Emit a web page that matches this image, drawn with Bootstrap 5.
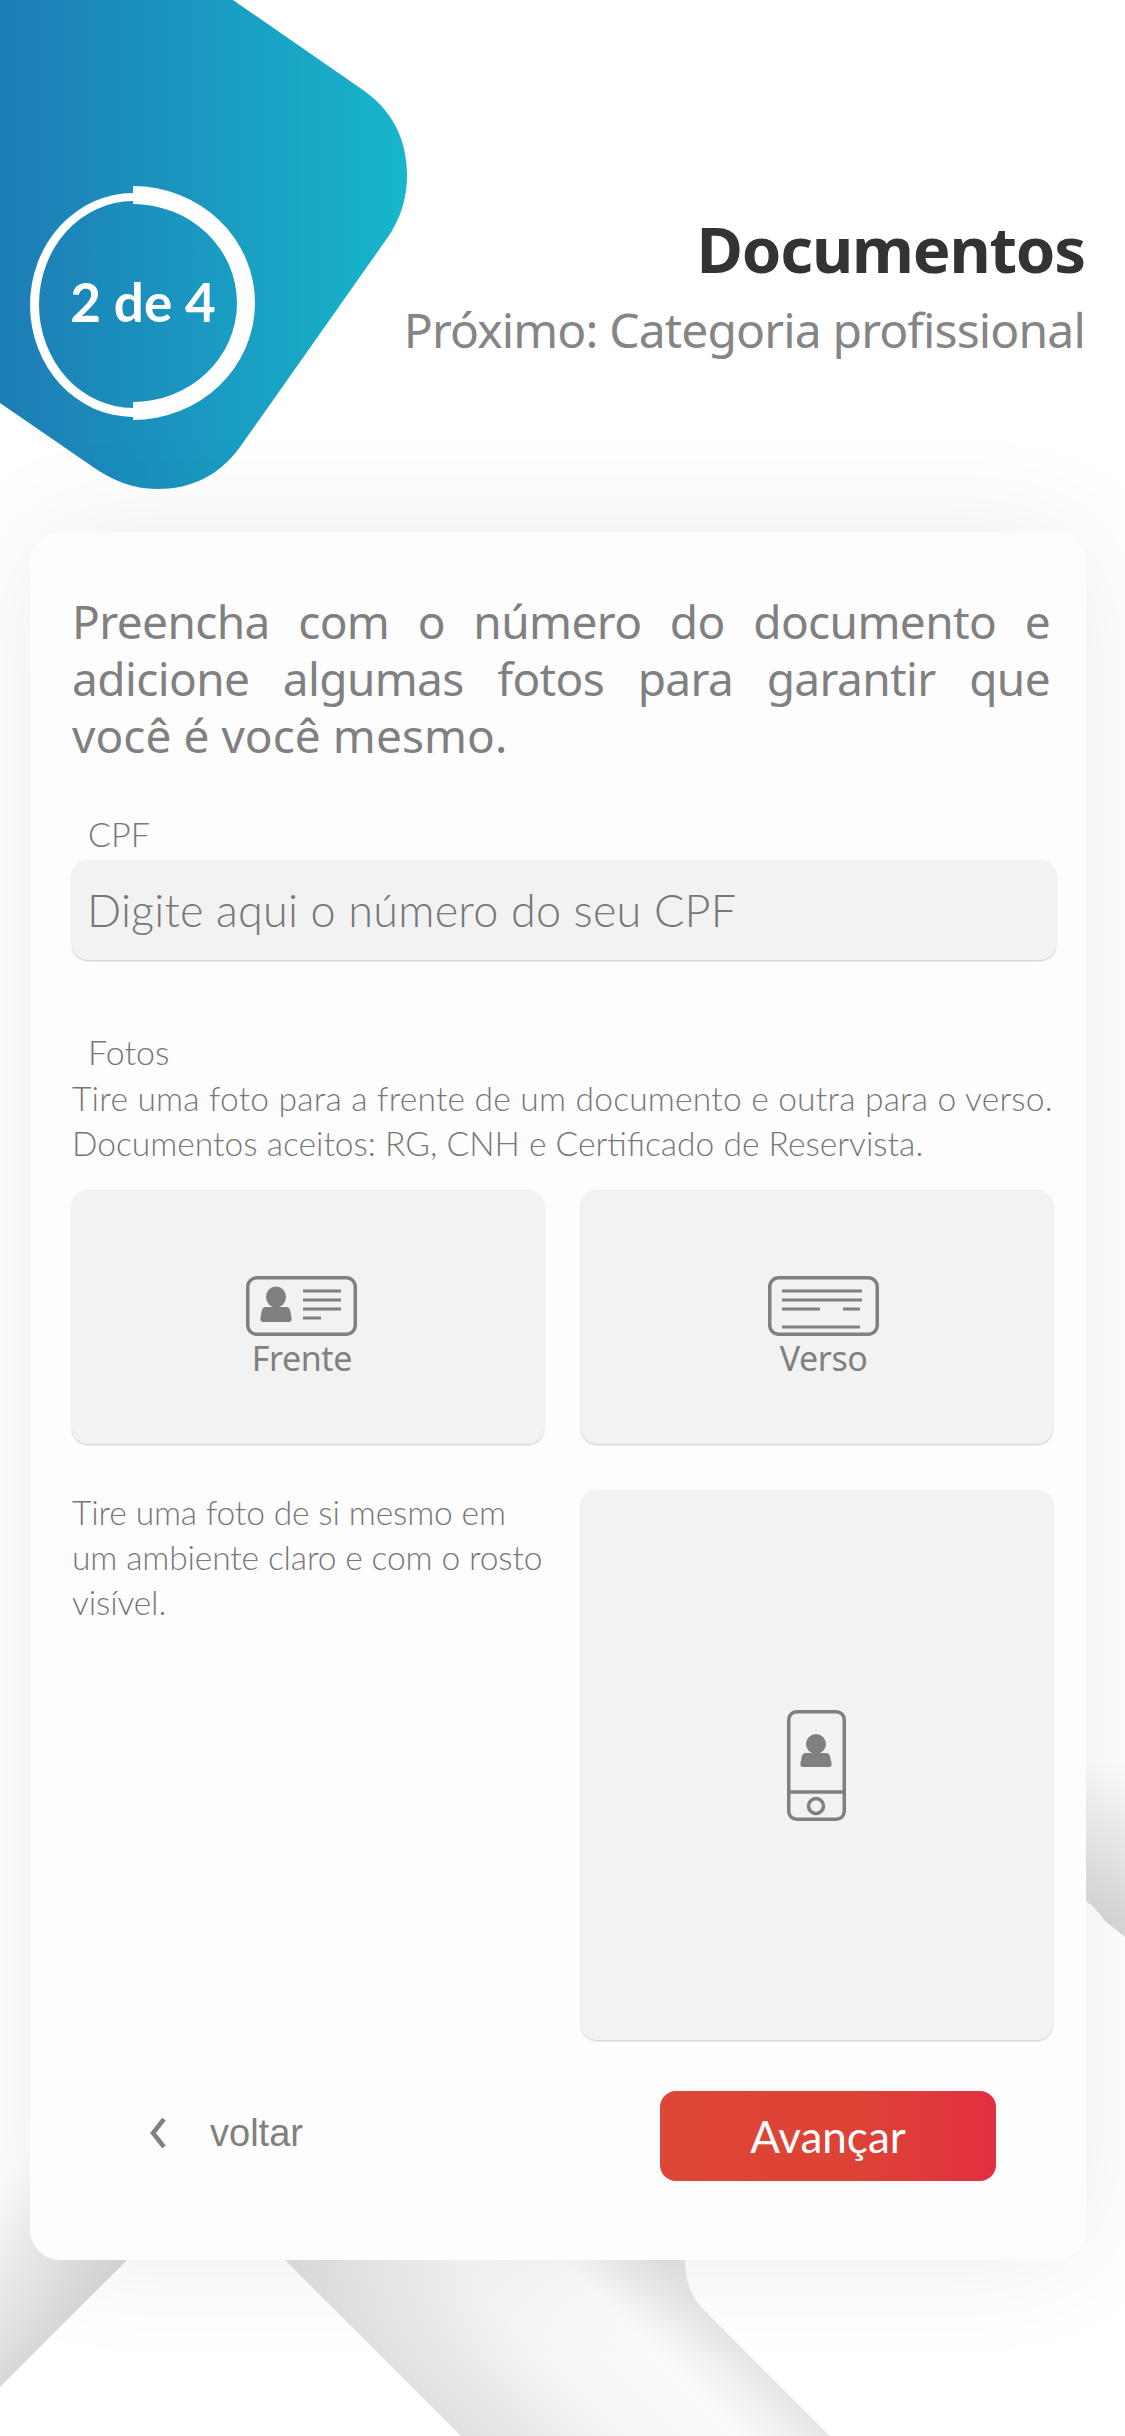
<!DOCTYPE html>
<html lang="pt-BR">

<head>
    <meta charset="UTF-8">
    <meta name="viewport" content="width=device-width, initial-scale=1.0">
    <title>Documentos</title>
    <link href="https://cdn.jsdelivr.net/npm/bootstrap@5.3.3/dist/css/bootstrap.min.css" rel="stylesheet">
    <style>
        body { width: 1125px; height: 2436px; overflow: hidden; background: #fff; font-family: "Lato", sans-serif; color: #808080; }
        .page-wrap { position: relative; height: 2436px; }
        .page-shapes { position: absolute; left: 0; top: 0; z-index: 0; }
        .page-head, .form-card { position: relative; z-index: 1; }

        /* header */
        .page-head { height: 532px; }
        .step-blob { position: relative; width: 407px; height: 489px; flex: none; margin-right: -20px; }
        .step-label { position: absolute; left: 30px; width: 226px; top: 270px; line-height: 64px; text-align: center; color: #fff; font-size: 53px; font-weight: 700; white-space: nowrap; }
        .head-text { width: 738px; padding: 212px 40px 0 0; text-align: right; font-family: "Noto Sans", sans-serif; white-space: nowrap; }
        .head-title { font-size: 63.5px; line-height: 74px; font-weight: 700; color: #333; margin: 0; letter-spacing: -1.2px; }
        .head-next { font-size: 48px; line-height: 60px; color: #858585; margin: 14px 0 0; letter-spacing: -.85px; }

        /* card */
        .form-card { width: 1056px; height: 1728px; margin-left: 30px; padding: 61px 30px 0 42px; background: #fdfdfd; border: 0; border-radius: 30px; box-shadow: 0 0 120px rgba(0, 0, 0, .07); }
        .intro-text { font-family: "Noto Sans", sans-serif; font-size: 46px; line-height: 57px; color: #808080; width: 978px; margin: 0 0 50px; letter-spacing: -.6px; }
        .intro-line { display: block; white-space: nowrap; text-align: justify; text-align-last: justify; }
        .intro-end { display: block; letter-spacing: .05px; }
        .field-label { display: block; font-size: 34px; line-height: 40px; font-weight: 300; color: #777; margin: 0 0 6px 16px; }
        .cpf-input.form-control { height: 100px; background: #f2f2f2; border: 0; border-radius: 16px; box-shadow: 0 1px 2px rgba(0, 0, 0, .22); padding: 0 15px; font-size: 45px; letter-spacing: .2px; font-weight: 300; margin-bottom: 72px; }
        .cpf-input.form-control::placeholder { color: #777; opacity: 1; }
        .help-text { font-size: 33.6px; line-height: 45px; font-weight: 300; color: #777; margin: 0; white-space: nowrap; }
        .help-wide { letter-spacing: .2px; }
        .tile-row { --bs-gutter-x: 37px; --bs-gutter-y: 0; margin-right: -15px; }
        .tile-gap { margin-top: 46px; }
        .photo-tile { background: #f2f2f2; border-radius: 16px; box-shadow: 0 1px 2px rgba(0, 0, 0, .2); }
        .tile-doc { height: 254px; padding-top: 18px; }
        .tile-self { height: 550px; }
        .tile-name { font-family: "Noto Sans", sans-serif; font-size: 34px; line-height: 38px; margin-top: 3px; letter-spacing: -.4px; }
        .shift-left { padding-right: 12px; }
        .shift-right { padding-left: 14px; }
        .self-text { letter-spacing: -.15px; }

        /* footer */
        .form-foot { margin-top: 51px; padding: 0 60px 0 78px; }
        .back-link { font-family: "Liberation Sans", sans-serif; font-size: 38px; color: #808080; text-decoration: none; gap: 44px; padding-bottom: 6px; }
        .next-btn.btn { width: 336px; height: 90px; border: 0; border-radius: 16px; background: linear-gradient(90deg, #de4735 0%, #dd4236 60%, #e32f41 100%); color: #fff; font-size: 44px; font-weight: 400; padding: 0; }
    </style>
</head>

<body>
    <div class="page-wrap">
        <!-- background shapes behind the card -->
        <svg class="page-shapes" width="1125" height="2436" viewBox="0 0 1125 2436">
            <defs>
                <linearGradient id="shadeLeft" gradientUnits="userSpaceOnUse" x1="64" y1="2323" x2="-40" y2="2219">
                    <stop offset="0" stop-color="#d8d8d8" />
                    <stop offset="1" stop-color="#d8d8d8" stop-opacity="0" />
                </linearGradient>
                <linearGradient id="shadeMid" gradientUnits="userSpaceOnUse" x1="372" y1="2347" x2="557" y2="2162">
                    <stop offset="0" stop-color="#e0e0e0" />
                    <stop offset=".45" stop-color="#f6f6f6" />
                    <stop offset=".75" stop-color="#fbfbfb" />
                    <stop offset="1" stop-color="#e6e6e6" />
                </linearGradient>
                <linearGradient id="shadeRight" gradientUnits="userSpaceOnUse" x1="1105" y1="1919" x2="1125" y2="1760">
                    <stop offset="0" stop-color="#d8d8d8" />
                    <stop offset="1" stop-color="#d8d8d8" stop-opacity="0" />
                </linearGradient>
            </defs>
            <polygon points="0,2150 236,2150 128,2259 0,2387" fill="url(#shadeLeft)" />
            <path d="M284 2259 L461 2436 H830 L700 2306 Q685 2288 685 2259 V2150 H284 Z" fill="url(#shadeMid)" />
            <path d="M1086 1700 H1125 V1937 L1105 1921 Q1095 1907 1086 1901 Z" fill="url(#shadeRight)" />
        </svg>

        <header class="page-head d-flex">
            <div class="step-blob">
                <svg width="407" height="489" viewBox="0 0 407 489">
                    <defs>
                        <linearGradient id="blobFill" x1="0" y1="0" x2="1" y2="0">
                            <stop offset="0" stop-color="#1d7cb5" />
                            <stop offset="1" stop-color="#17b6cc" />
                        </linearGradient>
                    </defs>
                    <path d="M0 0 H233 L363 90 C400 116 407 150 407 177 C407 200 399 221 388 237 L240 447 C218 477 190 489 157 489 C133 489 112 480 93 467 L0 403 Z" fill="url(#blobFill)" />
                    <path d="M133 186 A122 117 0 0 1 133 420 V402 A104 99 0 0 0 133 204 Z" fill="#fff" />
                    <path d="M133 193 A103 112 0 0 0 133 417 V408 A94 103.5 0 0 1 133 201 Z" fill="#fff" />
                </svg>
                <span class="step-label">2 de 4</span>
            </div>
            <div class="head-text">
                <h1 class="head-title">Documentos</h1>
                <p class="head-next">Próximo: Categoria profissional</p>
            </div>
        </header>

        <main class="card form-card">
            <p class="intro-text">
                <span class="intro-line">Preencha com o número do documento e</span>
                <span class="intro-line">adicione algumas fotos para garantir que</span>
                <span class="intro-end">você é você mesmo.</span>
            </p>

            <label class="field-label" for="cpf">CPF</label>
            <input type="text" class="form-control cpf-input" id="cpf" placeholder="Digite aqui o número do seu CPF">

            <span class="field-label mb-0">Fotos</span>
            <p class="help-text mt-1 mb-4"><span class="help-wide">Tire uma foto para a frente de um documento e outra para o verso.</span><br>Documentos aceitos: RG, CNH e Certificado de Reservista.</p>

            <div class="row tile-row">
                <div class="col-6">
                    <div class="photo-tile tile-doc shift-left d-flex flex-column align-items-center justify-content-center">
                        <svg width="111" height="60" viewBox="0 0 111 60" fill="none" stroke="#808080">
                            <rect x="1.75" y="1.75" width="107.5" height="56.5" rx="9" stroke-width="3.5" />
                            <path d="M57 15H95M57 24H95M57 33H95M57 42H75" stroke-width="3" />
                            <ellipse cx="30" cy="21" rx="10" ry="10.5" fill="#808080" stroke="none" />
                            <path d="M20 31H40C43 31 44 33 44.500 36L45.500 42C46 45 44.500 46 42 46H18C15.500 46 14 45 14.500 42L15.500 36C16 33 17 31 20 31Z" fill="#808080" stroke="none" />
                        </svg>
                        <span class="tile-name">Frente</span>
                    </div>
                </div>
                <div class="col-6">
                    <div class="photo-tile tile-doc shift-right d-flex flex-column align-items-center justify-content-center">
                        <svg width="111" height="60" viewBox="0 0 111 60" fill="none" stroke="#808080">
                            <rect x="1.75" y="1.75" width="107.5" height="56.5" rx="9" stroke-width="3.5" />
                            <path d="M14 15H94M14 24H94M14 33H52M75 33H92M14 51H92" stroke-width="3" />
                        </svg>
                        <span class="tile-name">Verso</span>
                    </div>
                </div>
            </div>

            <div class="row tile-row tile-gap">
                <div class="col-6">
                    <p class="help-text self-text">Tire uma foto de si mesmo em<br>um ambiente claro e com o rosto<br>visível.</p>
                </div>
                <div class="col-6">
                    <div class="photo-tile tile-self d-flex align-items-center justify-content-center">
                        <svg width="59" height="111" viewBox="0 0 59 111" fill="none" stroke="#808080" stroke-width="3.500">
                            <rect x="1.750" y="1.750" width="55.500" height="107.500" rx="8" />
                            <path d="M2 82H57" />
                            <circle cx="29" cy="96" r="7.500" />
                            <circle cx="29" cy="34" r="10" fill="#808080" stroke="none" />
                            <path d="M19 43H39C42 43 43 45 43.500 48L44.500 53C45 56 44 57 41 57H17C14 57 13 56 13.500 53L14.500 48C15 45 16 43 19 43Z" fill="#808080" stroke="none" />
                        </svg>
                    </div>
                </div>
            </div>

            <div class="form-foot d-flex justify-content-between align-items-center">
                <a href="#" class="back-link d-flex align-items-center">
                    <svg width="16" height="30" viewBox="0 0 16 30" fill="none" stroke="#808080" stroke-width="4.500">
                        <path d="M14 1 L3 15 L14 29" />
                    </svg>
                    <span>voltar</span>
                </a>
                <button type="button" class="btn next-btn">Avançar</button>
            </div>
        </main>
    </div>

    <script src="https://cdn.jsdelivr.net/npm/bootstrap@5.3.3/dist/js/bootstrap.bundle.min.js"></script>
</body>

</html>
